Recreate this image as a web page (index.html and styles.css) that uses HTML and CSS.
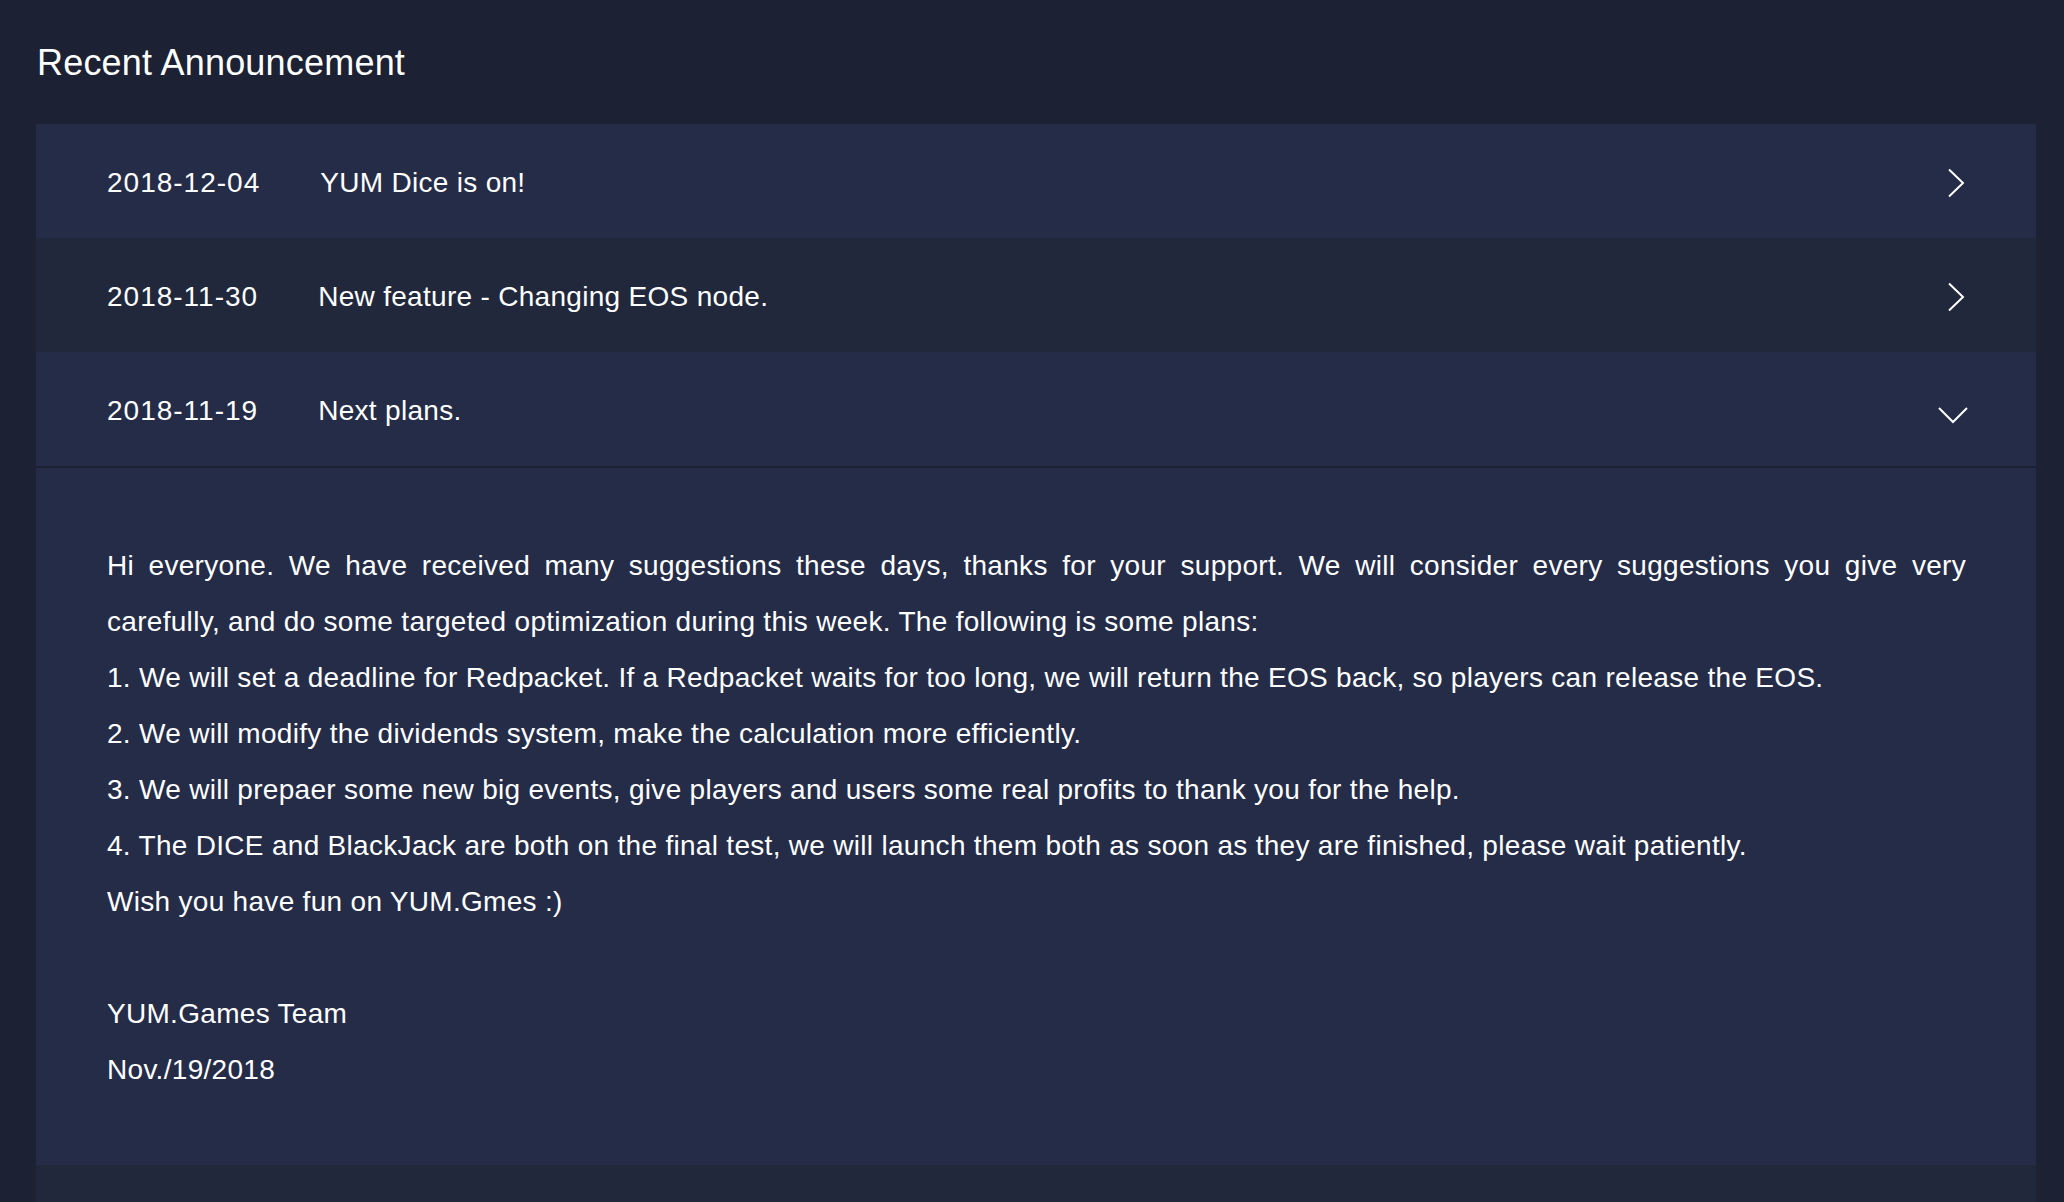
FILE: index.html
```html
<!DOCTYPE html>
<html lang="en">
<head>
<meta charset="utf-8">
<title>Recent Announcement</title>
<link rel="stylesheet" href="styles.css">
</head>
<body>
<main class="page">
  <h1 class="page-title">Recent Announcement</h1>
  <section class="notice-list">
    <div class="notice-row">
      <span class="notice-date">2018-12-04</span>
      <span class="notice-title">YUM Dice is on!</span>
      <svg class="notice-icon" viewBox="0 0 32 30" width="32" height="30"><polyline points="13,1.5 27,15 13,28.5" fill="none" stroke="#fff" stroke-width="2"/></svg>
    </div>
    <div class="notice-row notice-row--alt">
      <span class="notice-date">2018-11-30</span>
      <span class="notice-title">New feature - Changing EOS node.</span>
      <svg class="notice-icon" viewBox="0 0 32 30" width="32" height="30"><polyline points="13,1.5 27,15 13,28.5" fill="none" stroke="#fff" stroke-width="2"/></svg>
    </div>
    <div class="notice-row notice-row--open">
      <span class="notice-date">2018-11-19</span>
      <span class="notice-title">Next plans.</span>
      <svg class="notice-icon" viewBox="0 0 32 30" width="32" height="30"><polyline points="3,13 17,27 31,13" fill="none" stroke="#fff" stroke-width="2"/></svg>
    </div>
    <div class="notice-body">
      <p class="notice-para"><span class="notice-line">Hi everyone. We have received many suggestions these days, thanks for your support. We will consider every suggestions you give very</span> carefully, and do some targeted optimization during this week. The following is some plans:</p>
      <p class="notice-para">1. We will set a deadline for Redpacket. If a Redpacket waits for too long, we will return the EOS back, so players can release the EOS.</p>
      <p class="notice-para">2. We will modify the dividends system, make the calculation more efficiently.</p>
      <p class="notice-para">3. We will prepaer some new big events, give players and users some real profits to thank you for the help.</p>
      <p class="notice-para">4. The DICE and BlackJack are both on the final test, we will launch them both as soon as they are finished, please wait patiently.</p>
      <p class="notice-para">Wish you have fun on YUM.Gmes :)</p>
      <p class="notice-para notice-sign">YUM.Games Team</p>
      <p class="notice-para">Nov./19/2018</p>
    </div>
    <div class="notice-row notice-row--alt"></div>
  </section>
</main>
</body>
</html>
```

FILE: styles.css
```css
html {
  overflow: hidden;
  background: #1c2133;
}

body {
  margin: 0;
  background: #1c2133;
  color: #ffffff;
  font-family: "Liberation Sans", Arial, sans-serif;
}

.page {
  padding: 41px 28px 0 36px;
}

.page-title {
  margin: 0 0 39px 1px;
  font-size: 36px;
  line-height: 44px;
  font-weight: 400;
  letter-spacing: 0.2px;
}

.notice-list {
  display: flex;
  flex-direction: column;
}

.notice-row {
  display: flex;
  align-items: center;
  height: 114px;
  box-sizing: border-box;
  padding: 3px 68px 0 71px;
  background: #252c47;
  font-size: 28px;
  line-height: 32px;
}

.notice-row--alt {
  background: #21283c;
}

.notice-row--open {
  border-bottom: 2px solid #1c2134;
  height: 116px;
}

.notice-date {
  letter-spacing: 1px;
  margin-right: 60px;
}

.notice-title {
  flex: 1;
  letter-spacing: 0.3px;
}

.notice-icon {
  flex: none;
  display: block;
}

.notice-row--open .notice-icon {
  margin-top: -2px;
}

.notice-body {
  background: #252c47;
  padding: 70px 70px 67px 71px;
  font-size: 28px;
  line-height: 56px;
  letter-spacing: 0.3px;
  text-align: justify;
}

.notice-para {
  margin: 0;
}

.notice-line {
  display: block;
  text-align-last: justify;
}

.notice-sign {
  margin-top: 56px;
}
```
